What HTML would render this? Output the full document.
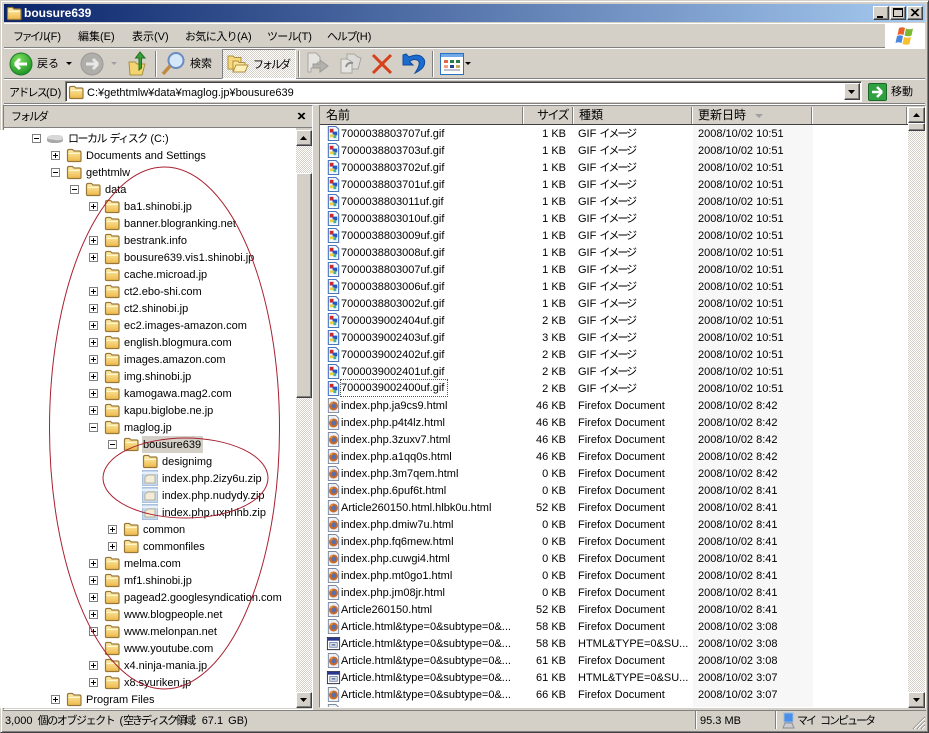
<!DOCTYPE html>
<html lang="ja"><head><meta charset="utf-8"><title>bousure639</title>
<style>
*{box-sizing:border-box}
html,body{margin:0;padding:0;width:929px;height:733px;overflow:hidden;background:#d4d0c8}
body{position:relative;font:11px/17px "Liberation Sans","Noto Sans CJK JP",sans-serif;color:#000}
.a0{position:absolute}
.d{background:repeating-conic-gradient(#d4d0c8 0 25%,#fff 0 50%) 0 0/2px 2px}
.btn{position:absolute;background:#d4d0c8;border:1px solid;border-color:#fff #404040 #404040 #fff;box-shadow:inset -1px -1px 0 #808080}
.hl{position:absolute;height:1px;background:#808080;box-shadow:0 1px 0 #fff}
.vl{position:absolute;width:1px;background:#808080;box-shadow:1px 0 0 #fff}
.txt{position:absolute;white-space:nowrap;line-height:16px}
.tree{position:absolute;left:0;top:130px;width:296px;height:578px;overflow:hidden;background:#fff}
.t{position:relative;height:17px;white-space:nowrap}
.t svg{position:absolute;left:var(--x);top:0;width:16px;height:16px}
.t span{position:absolute;left:calc(var(--x) + 20px);top:1px;line-height:16px}
.t i{position:absolute;left:calc(var(--x) - 15px);top:4px;width:9px;height:9px;border:1px solid #808080;background:linear-gradient(#000,#000) center/5px 1px no-repeat #fff}
.t i.p{background:linear-gradient(#000,#000) center/5px 1px no-repeat,linear-gradient(#000,#000) center/1px 5px no-repeat,#fff}
.a{--x:66px}.b{--x:85px}.c{--x:104px}.e{--x:123px}.f{--x:142px}
.list{position:absolute;left:320px;top:125px;width:588px;height:582px;overflow:hidden;background:#fff}
.r{position:relative;height:17px;white-space:nowrap}
.r svg{position:absolute;left:6px;top:1px;width:15px;height:15px}
.r b,.r u,.r s,.r em{position:absolute;font-weight:400;font-style:normal;text-decoration:none;top:1px;line-height:16px}
.r b{left:21px}
.r u{right:342px}
.r s{left:258px}
.r s a{letter-spacing:-2px}
.r em{left:378px}
.h{position:absolute;top:107px;height:17px;background:#d4d0c8;border-right:1px solid #fff;box-shadow:inset -1px 0 0 #808080;line-height:17px;padding-left:6px;white-space:nowrap;font-size:12px}
</style></head><body>
<svg width="0" height="0" style="position:absolute"><defs>
<linearGradient id="fg" x1="0" y1="0" x2="0" y2="1"><stop offset="0" stop-color="#fff0b0"/><stop offset="1" stop-color="#eeb848"/></linearGradient>
<symbol id="fo" viewBox="0 0 16 16"><path d="M1.500 13.500V4q0-1.500 1.500-1.500h3.500l1.500 1.500h5.500q1.500 0 1.500 1.500v8q0 1-1 1H2.500q-1 0-1-1z" fill="url(#fg)" stroke="#98783a" stroke-width="1.200"/><path d="M2.500 6.500h11" stroke="#fff7d0"/></symbol>
<symbol id="gi" viewBox="0 0 16 16"><path d="M2.500 .5h8l3 3v12h-11z" fill="#f4f8ff" stroke="#4a78c0" stroke-width="1.200"/><rect x="4" y="3" width="4" height="4" fill="#d02828"/><rect x="7" y="6" width="5" height="4" fill="#1e58c8"/><rect x="4" y="9" width="5" height="3" fill="#f0d040"/><rect x="8" y="10" width="3" height="3" fill="#40b0a0"/></symbol>
<symbol id="ff" viewBox="0 0 16 16"><path d="M2.500 .5h8l3 3v12h-11z" fill="#eef0f4" stroke="#7c88a0"/><circle cx="8" cy="8.500" r="4.800" fill="#c86a28"/><circle cx="8.500" cy="8.500" r="2.600" fill="#5c6fa8"/><path d="M4 6q2-2 4-1-2 .5-2 2z" fill="#f0a040"/></symbol>
<symbol id="ht" viewBox="0 0 16 16"><path d="M1.500 1.500h13v13h-13z" fill="#fff" stroke="#303048"/><path d="M2 2h12v3H2z" fill="#283890"/><rect x="4" y="7" width="8" height="5" fill="#dce4f0" stroke="#5870a0" stroke-width=".8"/><path d="M6 9.500h4" stroke="#203060"/></symbol>
<symbol id="zi" viewBox="0 0 16 16"><rect x=".5" y=".5" width="15" height="15" fill="#c4d8ee" stroke="#a8c0de"/><path d="M3 7l3-2h7v8H3z" fill="#f2ecd8" stroke="#b8b098"/><path d="M0 3h16" stroke="#e8f0fa" stroke-width="2"/></symbol>
</defs></svg>

<!-- window frame -->
<div class="a0" style="left:0;top:0;width:929px;height:733px;border:1px solid;border-color:#d4d0c8 #404040 #404040 #d4d0c8;box-shadow:inset 1px 1px 0 #fff,inset -1px -1px 0 #808080"></div>

<!-- title bar -->
<div class="a0" style="left:4px;top:4px;width:921px;height:18px;background:linear-gradient(90deg,#0a246a,#a6caf0)"></div>
<svg class="a0" style="left:6px;top:5px" width="16" height="16"><use href="#fo"/></svg>
<div class="txt" style="left:24px;top:5px;color:#fff;font-weight:700;font-size:12px">bousure639</div>
<div class="btn" style="left:873px;top:6px;width:16px;height:14px"><div class="a0" style="left:3px;top:9px;width:6px;height:2px;background:#000"></div></div>
<div class="btn" style="left:890px;top:6px;width:16px;height:14px"><div class="a0" style="left:2px;top:1px;width:10px;height:9px;border:1px solid #000;border-top-width:2px"></div></div>
<div class="btn" style="left:907px;top:6px;width:16px;height:14px"><svg class="a0" style="left:2px;top:1px" width="10" height="10"><path d="M1 1l7 7M2 1l7 7M8 1l-7 7M9 1l-7 7" stroke="#000" fill="none"/></svg></div>

<!-- menu -->
<div class="hl" style="left:4px;top:47px;width:921px"></div>
<div class="a0" style="left:4px;top:23px;width:921px;height:1px;background:#fff"></div>
<div class="txt" style="left:13px;top:29px"><a style="letter-spacing:-2.500px">ファイル</a>(F)</div>
<div class="txt" style="left:78px;top:29px">編集(E)</div>
<div class="txt" style="left:132px;top:29px">表示(V)</div>
<div class="txt" style="left:185px;top:29px"><a style="letter-spacing:-.6px">お気に入り</a>(A)</div>
<div class="txt" style="left:267px;top:29px"><a style="letter-spacing:-.7px">ツール</a>(T)</div>
<div class="txt" style="left:327px;top:29px"><a style="letter-spacing:-1.300px">ヘルプ</a>(H)</div>
<div class="a0" style="left:885px;top:24px;width:40px;height:24px;background:#fff"></div>
<svg class="a0" style="left:894px;top:26px" width="21" height="20"><path d="M5 2q3-1.500 6 0l-1.500 7q-3-1.500-6 0z" fill="#e8602c"/><path d="M12 2.500q3 1.500 7 0l-1.500 7q-3 1.500-7 0z" fill="#7cb832"/><path d="M3 10q3-1.500 6 0l-1.500 7q-3-1.500-6 0z" fill="#4a88e0"/><path d="M10 11q3 1.500 7 0l-1.500 7q-3 1.500-7 0z" fill="#f8c030"/></svg>

<!-- toolbar -->
<div class="hl" style="left:4px;top:78px;width:921px"></div>
<svg class="a0" style="left:9px;top:52px" width="24" height="24"><defs><radialGradient id="gb" cx=".4" cy=".3" r=".8"><stop offset="0" stop-color="#7ee060"/><stop offset="1" stop-color="#118a1c"/></radialGradient></defs><circle cx="12" cy="12" r="11" fill="url(#gb)" stroke="#1f7a28"/><path d="M6 12h12M6 12l5-5M6 12l5 5" stroke="#fff" stroke-width="3" fill="none"/></svg>
<div class="txt" style="left:37px;top:56px">戻る</div>
<svg class="a0" style="left:66px;top:62px" width="7" height="4"><path d="M0 0h6l-3 3z" fill="#000"/></svg>
<svg class="a0" style="left:80px;top:52px" width="24" height="24"><circle cx="12" cy="12" r="11" fill="#b0aeaa" stroke="#9a9894"/><path d="M18 12H6M18 12l-5-5M18 12l-5 5" stroke="#e8e8e8" stroke-width="3" fill="none"/></svg>
<svg class="a0" style="left:111px;top:62px" width="7" height="4"><path d="M0 0h6l-3 3z" fill="#a0a0a0"/></svg>
<svg class="a0" style="left:128px;top:50px" width="20" height="26"><path d="M1 12h6l2 2h8l-3 11H2z" fill="#f4d470" stroke="#a89040"/><path d="M11 20V8H7.500L12 2l5 6h-3.500v10z" fill="#3aa03a" stroke="#1d701d"/></svg>
<div class="vl" style="left:155px;top:51px;height:26px"></div>
<svg class="a0" style="left:161px;top:51px" width="25" height="26"><circle cx="15" cy="9.500" r="7.500" fill="#d4e8fa" stroke="#6a8cc0" stroke-width="2"/><path d="M9 15L2 23" stroke="#c08a40" stroke-width="3.500"/></svg>
<div class="txt" style="left:190px;top:56px">検索</div>
<div class="a0 d" style="left:222px;top:49px;width:74px;height:30px;border:1px solid;border-color:#808080 #fff #fff #808080"></div>
<svg class="a0" style="left:227px;top:54px" width="22" height="20"><path d="M1 2h5l1.500 1.500H14V15H1z" fill="#f6d878" stroke="#b09040"/><path d="M6 7h5l1 1.500h6V18H6z" fill="#fbe49a" stroke="#b09040"/><path d="M6 18l3-7h12l-3 7z" fill="#fff0b8" stroke="#b09040"/></svg>
<div class="txt" style="left:253px;top:57px;letter-spacing:-2px">フォルダ</div>
<div class="vl" style="left:298px;top:51px;height:26px"></div>
<svg class="a0" style="left:306px;top:52px" width="24" height="24"><path d="M2 1h8l4 4v5h-2l-2 3v3H5v4H2z" fill="#e6e4e0" stroke="#a8a6a2"/><path d="M7 12h7V8l8 6-8 6v-4H7z" fill="#b4b2ae" stroke="#9c9a96"/></svg>
<svg class="a0" style="left:338px;top:52px" width="24" height="24"><path d="M3 7h7l4 3v11H3z" fill="#e6e4e0" stroke="#a8a6a2"/><path d="M9 2h7l4 3 3 1-3 11H14V10l-5-3z" fill="#dcdad6" stroke="#a8a6a2"/><path d="M8 15q1-5 7-4" stroke="#908e8a" stroke-width="2" fill="none"/></svg>
<svg class="a0" style="left:371px;top:53px" width="22" height="22"><path d="M2 2L20 20M20 2L2 20" stroke="#d8401c" stroke-width="3"/></svg>
<svg class="a0" style="left:401px;top:52px" width="25" height="24"><path d="M2 3v10h10L8.500 9.500Q13 6 17 8.500 20.500 11.500 14 21q11-5 9.500-12.500Q20 0 8 5L5 2z" fill="#1c6cd0" stroke="#124a9c"/></svg>
<div class="vl" style="left:432px;top:51px;height:26px"></div>
<svg class="a0" style="left:440px;top:53px" width="24" height="23"><rect x=".5" y=".5" width="23" height="21" fill="#fff" stroke="#2a70c0"/><rect x="1" y="1" width="22" height="3" fill="#70a8e8"/><g fill="#e06848"><rect x="4" y="7" width="4" height="3"/><rect x="4" y="12" width="4" height="3" fill="#f0a080"/></g><g fill="#2a8040"><rect x="10" y="7" width="4" height="3"/><rect x="16" y="7" width="4" height="3"/></g><rect x="10" y="12" width="4" height="3" fill="#204888"/><rect x="16" y="12" width="4" height="3" fill="#c8b060"/><rect x="4" y="16" width="16" height="2" fill="#c0c0d0"/></svg>
<svg class="a0" style="left:465px;top:62px" width="7" height="4"><path d="M0 0h6l-3 3z" fill="#000"/></svg>

<!-- address bar -->
<div class="hl" style="left:4px;top:103px;width:921px"></div>
<div class="txt" style="left:9px;top:85px"><a style="letter-spacing:-1.750px">アドレス</a>(D)</div>
<div class="a0" style="left:65px;top:81px;width:797px;height:21px;background:#fff;border:1px solid;border-color:#808080 #fff #fff #808080;box-shadow:inset 1px 1px 0 #404040"></div>
<svg class="a0" style="left:68px;top:84px" width="16" height="16"><use href="#fo"/></svg>
<div class="txt" style="left:87px;top:85px">C:¥gethtmlw¥data¥maglog.jp¥bousure639</div>
<div class="btn" style="left:844px;top:83px;width:16px;height:17px"><svg class="a0" style="left:3px;top:6px" width="8" height="4"><path d="M0 0h7l-3.500 4z" fill="#000"/></svg></div>
<div class="a0" style="left:868px;top:83px;width:19px;height:18px;background:#30a040;border:1px solid #186828;border-radius:2px"><svg class="a0" style="left:2px;top:2px" width="13" height="12"><path d="M1 6h10M11 6L6 1M11 6l-5 5" stroke="#fff" stroke-width="2.500" fill="none"/></svg></div>
<div class="txt" style="left:891px;top:84px">移動</div>

<!-- folder pane -->
<div class="a0" style="left:3px;top:105px;width:310px;height:605px;border:1px solid;border-color:#808080 #fff #fff #808080"></div>
<div class="txt" style="left:11px;top:109px;letter-spacing:-2px">フォルダ</div>
<svg class="a0" style="left:297px;top:112px" width="9" height="9"><path d="M1 1l6 6M2 1l6 6M7 1L1 7M8 1L2 7" stroke="#000" fill="none"/></svg>
<div class="a0" style="left:4px;top:127px;width:308px;height:1px;background:#808080"></div>
<div class="a0" style="left:4px;top:128px;width:292px;height:580px;background:#fff"></div>
<div class="tree">
<div class="t" style="--x:47px"><i></i><svg viewBox="0 0 16 16"><path d="M0 9q0-4 8-4t8 3v2q0 3-8 3t-8-3z" fill="#a8a8a8"/><path d="M0 8q0-3 8-3t8 3-8 2-8-2z" fill="#d8d8d8"/></svg><span style="left:68px"><a style="letter-spacing:-1.500px;word-spacing:2px">ローカル ディスク </a>(C:)</span></div>
<div class="t a"><i class="p"></i><svg><use href="#fo"/></svg><span>Documents and Settings</span></div>
<div class="t a"><i></i><svg><use href="#fo"/></svg><span>gethtmlw</span></div>
<div class="t b"><i></i><svg><use href="#fo"/></svg><span>data</span></div>
<div class="t c"><i class="p"></i><svg><use href="#fo"/></svg><span>ba1.shinobi.jp</span></div>
<div class="t c"><svg><use href="#fo"/></svg><span>banner.blogranking.net</span></div>
<div class="t c"><i class="p"></i><svg><use href="#fo"/></svg><span>bestrank.info</span></div>
<div class="t c"><i class="p"></i><svg><use href="#fo"/></svg><span>bousure639.vis1.shinobi.jp</span></div>
<div class="t c"><svg><use href="#fo"/></svg><span>cache.microad.jp</span></div>
<div class="t c"><i class="p"></i><svg><use href="#fo"/></svg><span>ct2.ebo-shi.com</span></div>
<div class="t c"><i class="p"></i><svg><use href="#fo"/></svg><span>ct2.shinobi.jp</span></div>
<div class="t c"><i class="p"></i><svg><use href="#fo"/></svg><span>ec2.images-amazon.com</span></div>
<div class="t c"><i class="p"></i><svg><use href="#fo"/></svg><span>english.blogmura.com</span></div>
<div class="t c"><i class="p"></i><svg><use href="#fo"/></svg><span>images.amazon.com</span></div>
<div class="t c"><i class="p"></i><svg><use href="#fo"/></svg><span>img.shinobi.jp</span></div>
<div class="t c"><i class="p"></i><svg><use href="#fo"/></svg><span>kamogawa.mag2.com</span></div>
<div class="t c"><i class="p"></i><svg><use href="#fo"/></svg><span>kapu.biglobe.ne.jp</span></div>
<div class="t c"><i></i><svg><use href="#fo"/></svg><span>maglog.jp</span></div>
<div class="t e"><i></i><svg><use href="#fo"/></svg><span style="background:#d4d0c8;padding:0 2px 0 1px;left:142px;top:0;height:17px;line-height:18px">bousure639</span></div>
<div class="t f"><svg><use href="#fo"/></svg><span>designimg</span></div>
<div class="t f"><svg><use href="#zi"/></svg><span>index.php.2izy6u.zip</span></div>
<div class="t f"><svg><use href="#zi"/></svg><span>index.php.nudydy.zip</span></div>
<div class="t f"><svg><use href="#zi"/></svg><span>index.php.uxphhb.zip</span></div>
<div class="t e"><i class="p"></i><svg><use href="#fo"/></svg><span>common</span></div>
<div class="t e"><i class="p"></i><svg><use href="#fo"/></svg><span>commonfiles</span></div>
<div class="t c"><i class="p"></i><svg><use href="#fo"/></svg><span>melma.com</span></div>
<div class="t c"><i class="p"></i><svg><use href="#fo"/></svg><span>mf1.shinobi.jp</span></div>
<div class="t c"><i class="p"></i><svg><use href="#fo"/></svg><span>pagead2.googlesyndication.com</span></div>
<div class="t c"><i class="p"></i><svg><use href="#fo"/></svg><span>www.blogpeople.net</span></div>
<div class="t c"><i class="p"></i><svg><use href="#fo"/></svg><span>www.melonpan.net</span></div>
<div class="t c"><svg><use href="#fo"/></svg><span>www.youtube.com</span></div>
<div class="t c"><i class="p"></i><svg><use href="#fo"/></svg><span>x4.ninja-mania.jp</span></div>
<div class="t c"><i class="p"></i><svg><use href="#fo"/></svg><span>x8.syuriken.jp</span></div>
<div class="t a"><i class="p"></i><svg><use href="#fo"/></svg><span>Program Files</span></div>
</div>
<!-- annotation ellipses -->
<svg class="a0" style="left:0;top:0" width="320" height="733"><ellipse cx="164.500" cy="428" rx="115" ry="261" fill="none" stroke="#a82030"/><ellipse cx="185.500" cy="478" rx="82.500" ry="40" fill="none" stroke="#a82030"/></svg>
<!-- tree scrollbar -->
<div class="a0 d" style="left:296px;top:130px;width:16px;height:578px"></div>
<div class="btn" style="left:296px;top:130px;width:16px;height:16px"><svg class="a0" style="left:3px;top:5px" width="8" height="4"><path d="M3.500 0L7 4H0z" fill="#000"/></svg></div>
<div class="btn" style="left:296px;top:173px;width:16px;height:225px"></div>
<div class="btn" style="left:296px;top:692px;width:16px;height:16px"><svg class="a0" style="left:3px;top:5px" width="8" height="4"><path d="M0 0h7L3.500 4z" fill="#000"/></svg></div>

<!-- file pane -->
<div class="a0" style="left:319px;top:105px;width:607px;height:603px;border:1px solid;border-color:#808080 #fff #fff #808080"></div>
<div class="h" style="left:320px;width:204px">名前</div>
<div class="h" style="left:524px;width:50px;padding-left:13px;letter-spacing:-1.500px">サイズ</div>
<div class="h" style="left:574px;width:119px;padding-left:5px">種類</div>
<div class="h" style="left:693px;width:120px;padding-left:5px">更新日時</div>
<div class="h" style="left:813px;width:95px"></div>
<svg class="a0" style="left:755px;top:114px" width="9" height="5"><path d="M0 0h8L4 4z" fill="#a0a0a0"/></svg>
<div class="a0" style="left:320px;top:124px;width:588px;height:1px;background:#404040"></div>
<div class="list">
<div class="a0" style="left:373px;top:0;width:120px;height:582px;background:#f7f7f7"></div>
<div class="r"><svg><use href="#gi"/></svg><b>7000038803707uf.gif</b><u>1 KB</u><s>GIF <a>イメージ</a></s><em>2008/10/02 10:51</em></div>
<div class="r"><svg><use href="#gi"/></svg><b>7000038803703uf.gif</b><u>1 KB</u><s>GIF <a>イメージ</a></s><em>2008/10/02 10:51</em></div>
<div class="r"><svg><use href="#gi"/></svg><b>7000038803702uf.gif</b><u>1 KB</u><s>GIF <a>イメージ</a></s><em>2008/10/02 10:51</em></div>
<div class="r"><svg><use href="#gi"/></svg><b>7000038803701uf.gif</b><u>1 KB</u><s>GIF <a>イメージ</a></s><em>2008/10/02 10:51</em></div>
<div class="r"><svg><use href="#gi"/></svg><b>7000038803011uf.gif</b><u>1 KB</u><s>GIF <a>イメージ</a></s><em>2008/10/02 10:51</em></div>
<div class="r"><svg><use href="#gi"/></svg><b>7000038803010uf.gif</b><u>1 KB</u><s>GIF <a>イメージ</a></s><em>2008/10/02 10:51</em></div>
<div class="r"><svg><use href="#gi"/></svg><b>7000038803009uf.gif</b><u>1 KB</u><s>GIF <a>イメージ</a></s><em>2008/10/02 10:51</em></div>
<div class="r"><svg><use href="#gi"/></svg><b>7000038803008uf.gif</b><u>1 KB</u><s>GIF <a>イメージ</a></s><em>2008/10/02 10:51</em></div>
<div class="r"><svg><use href="#gi"/></svg><b>7000038803007uf.gif</b><u>1 KB</u><s>GIF <a>イメージ</a></s><em>2008/10/02 10:51</em></div>
<div class="r"><svg><use href="#gi"/></svg><b>7000038803006uf.gif</b><u>1 KB</u><s>GIF <a>イメージ</a></s><em>2008/10/02 10:51</em></div>
<div class="r"><svg><use href="#gi"/></svg><b>7000038803002uf.gif</b><u>1 KB</u><s>GIF <a>イメージ</a></s><em>2008/10/02 10:51</em></div>
<div class="r"><svg><use href="#gi"/></svg><b>7000039002404uf.gif</b><u>2 KB</u><s>GIF <a>イメージ</a></s><em>2008/10/02 10:51</em></div>
<div class="r"><svg><use href="#gi"/></svg><b>7000039002403uf.gif</b><u>3 KB</u><s>GIF <a>イメージ</a></s><em>2008/10/02 10:51</em></div>
<div class="r"><svg><use href="#gi"/></svg><b>7000039002402uf.gif</b><u>2 KB</u><s>GIF <a>イメージ</a></s><em>2008/10/02 10:51</em></div>
<div class="r"><svg><use href="#gi"/></svg><b>7000039002401uf.gif</b><u>2 KB</u><s>GIF <a>イメージ</a></s><em>2008/10/02 10:51</em></div>
<div class="r"><svg><use href="#gi"/></svg><b style="outline:1px dotted #555;outline-offset:0;top:0;height:16px;line-height:17px;padding-right:3px">7000039002400uf.gif</b><u>2 KB</u><s>GIF <a>イメージ</a></s><em>2008/10/02 10:51</em></div>
<div class="r"><svg><use href="#ff"/></svg><b>index.php.ja9cs9.html</b><u>46 KB</u><s>Firefox Document</s><em>2008/10/02 8:42</em></div>
<div class="r"><svg><use href="#ff"/></svg><b>index.php.p4t4lz.html</b><u>46 KB</u><s>Firefox Document</s><em>2008/10/02 8:42</em></div>
<div class="r"><svg><use href="#ff"/></svg><b>index.php.3zuxv7.html</b><u>46 KB</u><s>Firefox Document</s><em>2008/10/02 8:42</em></div>
<div class="r"><svg><use href="#ff"/></svg><b>index.php.a1qq0s.html</b><u>46 KB</u><s>Firefox Document</s><em>2008/10/02 8:42</em></div>
<div class="r"><svg><use href="#ff"/></svg><b>index.php.3m7qem.html</b><u>0 KB</u><s>Firefox Document</s><em>2008/10/02 8:42</em></div>
<div class="r"><svg><use href="#ff"/></svg><b>index.php.6puf6t.html</b><u>0 KB</u><s>Firefox Document</s><em>2008/10/02 8:41</em></div>
<div class="r"><svg><use href="#ff"/></svg><b>Article260150.html.hlbk0u.html</b><u>52 KB</u><s>Firefox Document</s><em>2008/10/02 8:41</em></div>
<div class="r"><svg><use href="#ff"/></svg><b>index.php.dmiw7u.html</b><u>0 KB</u><s>Firefox Document</s><em>2008/10/02 8:41</em></div>
<div class="r"><svg><use href="#ff"/></svg><b>index.php.fq6mew.html</b><u>0 KB</u><s>Firefox Document</s><em>2008/10/02 8:41</em></div>
<div class="r"><svg><use href="#ff"/></svg><b>index.php.cuwgi4.html</b><u>0 KB</u><s>Firefox Document</s><em>2008/10/02 8:41</em></div>
<div class="r"><svg><use href="#ff"/></svg><b>index.php.mt0go1.html</b><u>0 KB</u><s>Firefox Document</s><em>2008/10/02 8:41</em></div>
<div class="r"><svg><use href="#ff"/></svg><b>index.php.jm08jr.html</b><u>0 KB</u><s>Firefox Document</s><em>2008/10/02 8:41</em></div>
<div class="r"><svg><use href="#ff"/></svg><b>Article260150.html</b><u>52 KB</u><s>Firefox Document</s><em>2008/10/02 8:41</em></div>
<div class="r"><svg><use href="#ff"/></svg><b>Article.html&amp;type=0&amp;subtype=0&amp;...</b><u>58 KB</u><s>Firefox Document</s><em>2008/10/02 3:08</em></div>
<div class="r"><svg><use href="#ht"/></svg><b>Article.html&amp;type=0&amp;subtype=0&amp;...</b><u>58 KB</u><s>HTML&amp;TYPE=0&amp;SU...</s><em>2008/10/02 3:08</em></div>
<div class="r"><svg><use href="#ff"/></svg><b>Article.html&amp;type=0&amp;subtype=0&amp;...</b><u>61 KB</u><s>Firefox Document</s><em>2008/10/02 3:08</em></div>
<div class="r"><svg><use href="#ht"/></svg><b>Article.html&amp;type=0&amp;subtype=0&amp;...</b><u>61 KB</u><s>HTML&amp;TYPE=0&amp;SU...</s><em>2008/10/02 3:07</em></div>
<div class="r"><svg><use href="#ff"/></svg><b>Article.html&amp;type=0&amp;subtype=0&amp;...</b><u>66 KB</u><s>Firefox Document</s><em>2008/10/02 3:07</em></div>
<div class="r"><svg><use href="#ff"/></svg><b>Article.html&amp;type=0&amp;subtype=0&amp;...</b><u>66 KB</u><s>Firefox Document</s><em>2008/10/02 3:07</em></div>
</div>
<!-- file scrollbar -->
<div class="a0 d" style="left:908px;top:107px;width:17px;height:601px"></div>
<div class="btn" style="left:908px;top:107px;width:17px;height:16px"><svg class="a0" style="left:4px;top:5px" width="8" height="4"><path d="M3.500 0L7 4H0z" fill="#000"/></svg></div>
<div class="btn" style="left:908px;top:123px;width:17px;height:8px"></div>
<div class="btn" style="left:908px;top:692px;width:17px;height:16px"><svg class="a0" style="left:4px;top:5px" width="8" height="4"><path d="M0 0h7L3.500 4z" fill="#000"/></svg></div>

<!-- status bar -->
<div class="a0" style="left:3px;top:710px;width:923px;height:1px;background:#808080"></div>
<div class="txt" style="left:5px;top:713px;word-spacing:2px">3,000 <a style="letter-spacing:-1.400px">個のオブジェクト</a> (<a style="letter-spacing:-2.100px">空きディスク領域</a>: 67.1 GB)</div>
<div class="vl" style="left:695px;top:711px;height:18px"></div>
<div class="txt" style="left:700px;top:713px">95.3 MB</div>
<div class="vl" style="left:775px;top:711px;height:18px"></div>
<svg class="a0" style="left:780px;top:712px" width="16" height="17"><path d="M4 1h9v9H4z" fill="#4a90e8" stroke="#9ab8e0"/><path d="M5 11h7l2 5H3z" fill="#c8ccd0" stroke="#8a8e94"/></svg>
<div class="txt" style="left:797px;top:713px;letter-spacing:-2px;word-spacing:4px">マイ コンピュータ</div>
<svg class="a0" style="left:912px;top:716px" width="14" height="14"><path d="M13 1L1 13M13 5L5 13M13 9L9 13" stroke="#808080" fill="none"/><path d="M13 2L2 13M13 6L6 13M13 10L10 13" stroke="#fff" fill="none"/></svg>
</body></html>
